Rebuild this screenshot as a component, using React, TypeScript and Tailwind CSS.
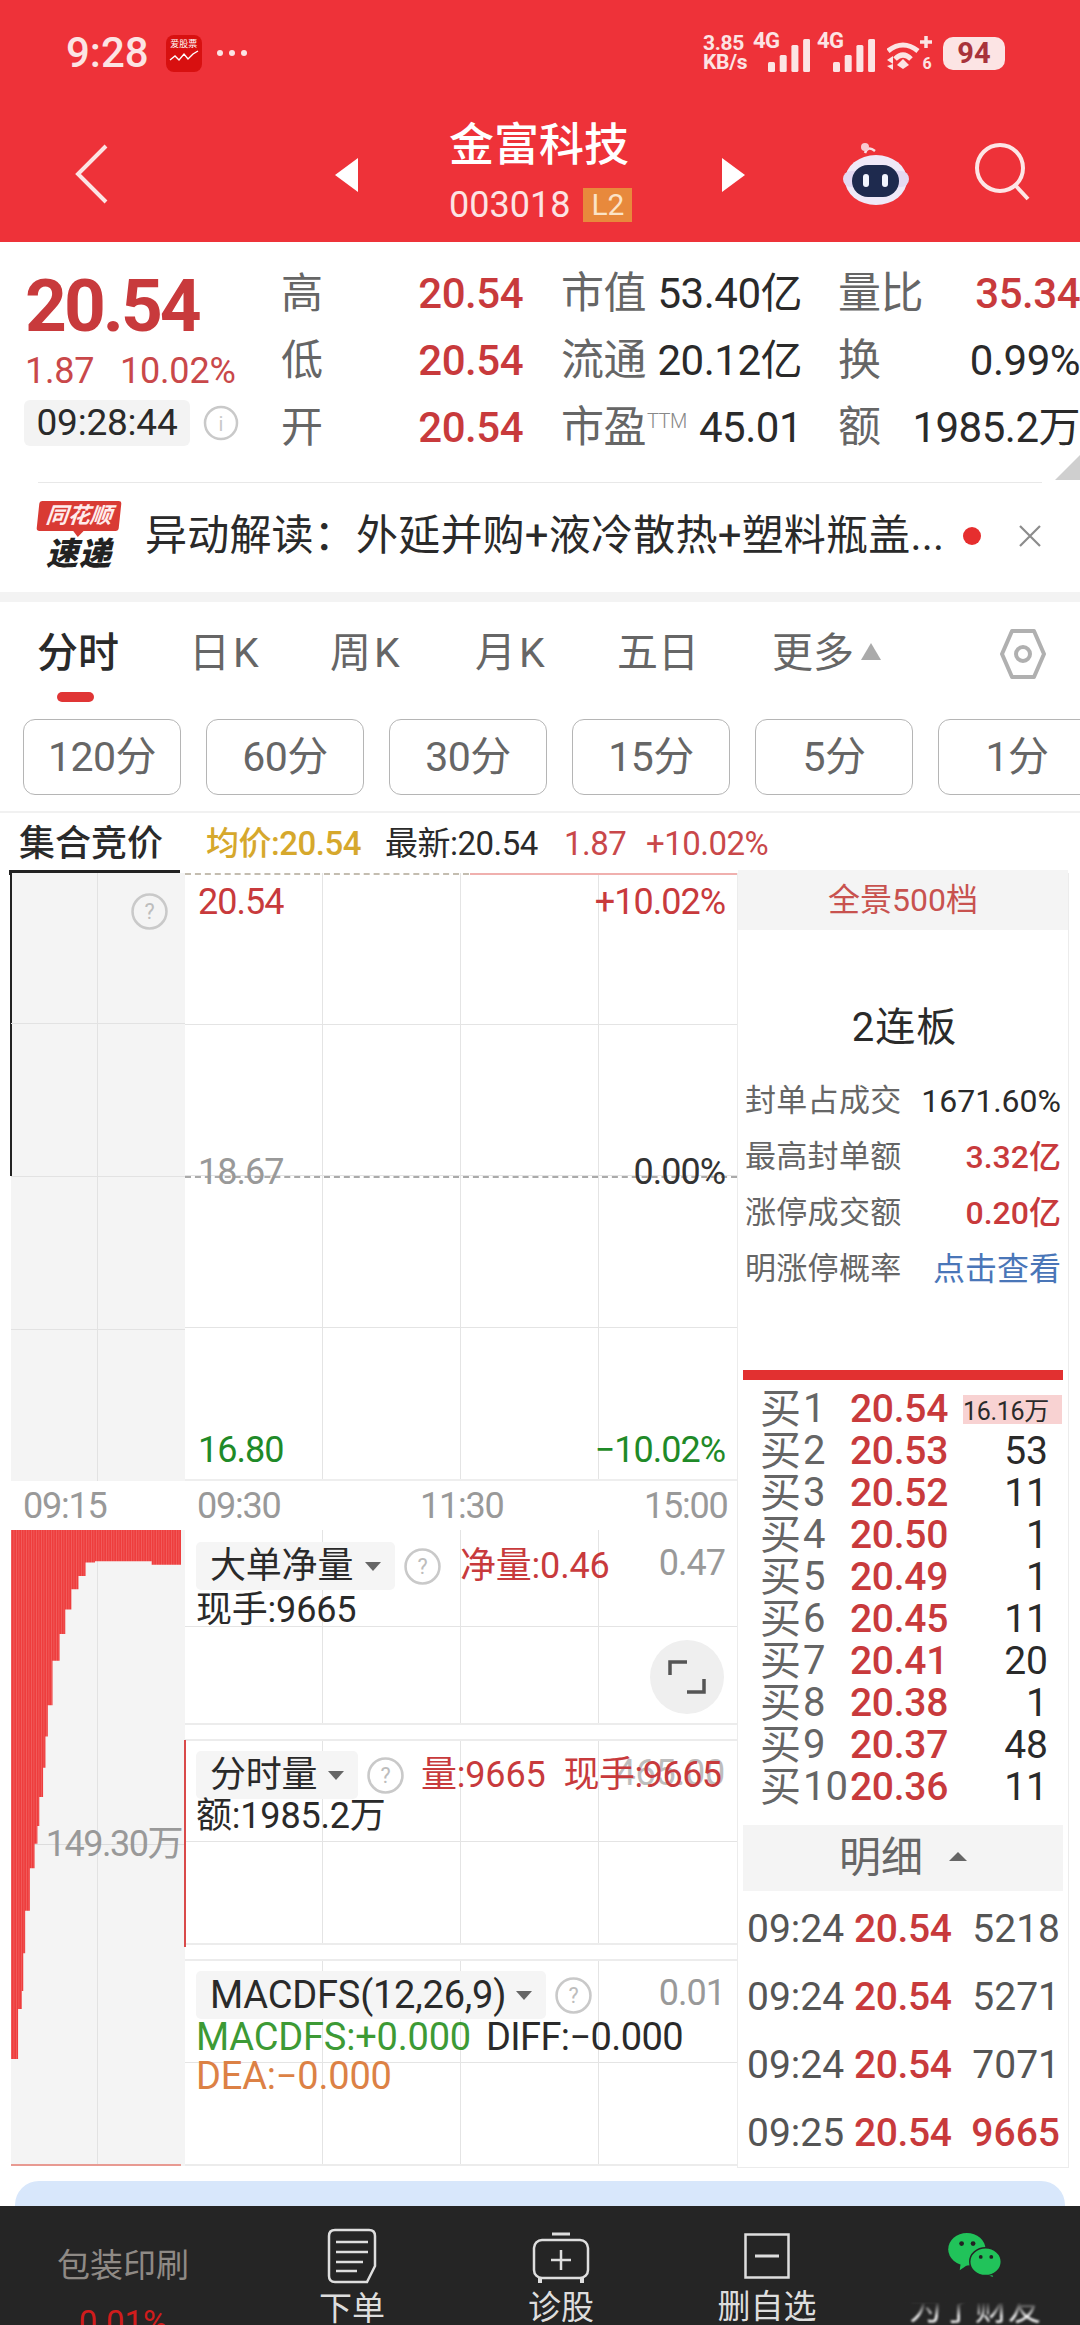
import React from "react";

const FONT = "font-['Roboto','Noto_Sans_CJK_SC',sans-serif]";

function Q({ size = 37, cls = "" }: { size?: number; cls?: string }) {
  return (
    <svg width={size} height={size} viewBox="0 0 36 36" className={cls}>
      <circle cx="18" cy="18" r="16.5" fill="none" stroke="#c9c9c9" strokeWidth="2.5" />
      <text x="18" y="25" textAnchor="middle" fontSize="21" fill="#bdbdbd" fontFamily="Roboto">?</text>
    </svg>
  );
}

function Caret({ up = false, color = "#666", w = 16, h = 9 }: { up?: boolean; color?: string; w?: number; h?: number }) {
  return (
    <svg width={w} height={h} viewBox="0 0 16 9" preserveAspectRatio="none">
      <polygon points={up ? "8,0 16,9 0,9" : "0,0 16,0 8,9"} fill={color} />
    </svg>
  );
}

function Signal() {
  const hs = [10, 17, 27, 33];
  return (
    <svg width="42" height="33" viewBox="0 0 42 33" className="absolute bottom-0 right-0">
      {hs.map((h, i) => (
        <rect key={i} x={i * 11.7} y={33 - h} width="7" height={h} rx="1.5" fill="#fce4e4" />
      ))}
    </svg>
  );
}

function StatusBar() {
  return (
    <div className="flex h-[106px] items-center pl-[66px]">
      <span className="text-[42px] font-medium leading-none tracking-[0px] text-[#fce4e4]">9:28</span>
      <div className="ml-[17px] flex h-[37px] w-[36px] flex-col items-center overflow-hidden rounded-[8px] bg-[#d81010] pt-[3px]">
        <span className="text-[9px] leading-[12px] text-white">爱股票</span>
        <svg width="30" height="14" viewBox="0 0 30 14">
          <polyline points="1,10 6,6 10,10 15,4 19,9 24,4 29,1" fill="none" stroke="#fff" strokeWidth="1.4" />
        </svg>
      </div>
      <div className="ml-[15px] flex gap-[6px]">
        <i className="h-[6px] w-[6px] rounded-full bg-[#fce4e4]" />
        <i className="h-[6px] w-[6px] rounded-full bg-[#fce4e4]" />
        <i className="h-[6px] w-[6px] rounded-full bg-[#fce4e4]" />
      </div>
      <div className="ml-auto flex h-[38px] items-center pr-[75px] text-[#fce4e4]">
        <div className="flex w-[50px] flex-col text-[21px] font-bold leading-[19px] tracking-[-0.3px]">
          <span>3.85</span>
          <span>KB/s</span>
        </div>
        <div className="relative h-[38px] w-[57px]">
          <span className="absolute left-0 top-[-4px] text-[22px] font-bold leading-[21px] tracking-[-0.5px]">4G</span>
          <Signal />
        </div>
        <div className="relative ml-[7px] h-[38px] w-[58px]">
          <span className="absolute left-0 top-[-4px] text-[22px] font-bold leading-[21px] tracking-[-0.5px]">4G</span>
          <Signal />
        </div>
        <svg width="46" height="34" viewBox="0 0 46 34" className="ml-[12px]">
          <g fill="none" stroke="#fce4e4" strokeWidth="5">
            <path d="M1 15 Q16 3 31 15" />
            <path d="M8 23 Q16 15 24 23" />
          </g>
          <polygon points="16,23 22,29 16,33 10,29" fill="#fce4e4" />
          <path d="M0 24 L6 20 L6 28 Z M0 30 L6 34 L6 28 Z" fill="#fce4e4" />
          <path d="M39 0 V12 M33 6 H45" stroke="#fce4e4" strokeWidth="3.5" />
          <text x="40" y="33" textAnchor="middle" fontSize="16" fontWeight="700" fill="#fce4e4" fontFamily="Roboto">6</text>
        </svg>
        <div className="ml-[10px] flex h-[33px] w-[62px] items-center justify-center rounded-[10px] bg-[#fce4e4] text-[29px] font-bold leading-none text-[#a8333b]">94</div>
      </div>
    </div>
  );
}

function NavRow() {
  return (
    <div className="flex h-[136px]">
      <svg width="40" height="64" viewBox="0 0 40 64" className="ml-[72px] mt-[36px]">
        <polyline points="34,4 6,32 34,60" fill="none" stroke="#fce4e4" strokeWidth="4" />
      </svg>
      <svg width="24" height="34" viewBox="0 0 24 34" className="ml-[223px] mt-[52px]">
        <polygon points="23,0 23,34 0,17" fill="#fff" />
      </svg>
      <div className="ml-[90px] flex w-[186px] flex-col">
        <div className="mt-[13px] text-[45px] font-medium leading-[54px] text-white">金富科技</div>
        <div className="mt-[14px] flex items-center">
          <span className="text-[36px] leading-[36px] text-[#fce4e4]">003018</span>
          <span className="ml-[13px] flex h-[34px] w-[49px] items-center justify-center bg-[#e8893c] text-[30px] leading-none text-[#fbe3c8]">L2</span>
        </div>
      </div>
      <svg width="24" height="34" viewBox="0 0 24 34" className="ml-[86px] mt-[52px]">
        <polygon points="1,0 1,34 24,17" fill="#fff" />
      </svg>
      <svg width="68" height="64" viewBox="0 0 68 64" className="ml-[98px] mt-[37px]">
        <path d="M22 10 C24 4 28 5 32 8" fill="none" stroke="#f8dfe4" strokeWidth="2.5" />
        <circle cx="22" cy="4" r="4" fill="#f8c9d2" />
        <ellipse cx="33" cy="37" rx="31" ry="25" fill="#efe9f8" />
        <rect x="0" y="28" width="66" height="16" rx="8" fill="#e4d9f2" />
        <rect x="9" y="22" width="47" height="32" rx="16" fill="#1e2a4e" />
        <rect x="20" y="31" width="6" height="13" rx="3" fill="#f2f5ff" />
        <rect x="39" y="31" width="6" height="13" rx="3" fill="#f2f5ff" />
      </svg>
      <svg width="60" height="60" viewBox="0 0 60 60" className="ml-[63px] mt-[36px]">
        <circle cx="26" cy="26" r="23" fill="none" stroke="#fde6e6" strokeWidth="4" />
        <line x1="42" y1="44" x2="54" y2="57" stroke="#fde6e6" strokeWidth="4" />
      </svg>
    </div>
  );
}

function QRow({ a, b, c, d, e, f, fCls = "text-[#2a2a2a]" }: any) {
  return (
    <div className="flex h-[67px] items-center text-[42px] leading-none tracking-[-0.5px]">
      <div className="flex w-[240px] items-center justify-between">
        <span className="ml-[-2px] text-[42px] text-[#666]">{a}</span>
        <span className="font-medium text-[#c83a3c]">{b}</span>
      </div>
      <div className="ml-[38px] flex w-[241px] items-center justify-between">
        <span className="text-[43px] text-[#666]">{c}</span>
        <span className="text-[#2a2a2a]">{d}</span>
      </div>
      <div className="ml-[36px] flex w-[242px] items-center justify-between">
        <span className="text-[43px] text-[#666]">{e}</span>
        <span className={fCls}>{f}</span>
      </div>
    </div>
  );
}

function Quote() {
  return (
    <div className="relative flex h-[240px]">
      <div className="w-[283px] pl-[25px]">
        <div className="mt-[20px] text-[73px] font-bold leading-[88px] tracking-[-3px] text-[#c83a3c]">20.54</div>
        <div className="mt-[-1px] flex h-[44px] items-center text-[36px] tracking-[-0.2px] text-[#c9484a]">
          <span className="w-[95px]">1.87</span>
          <span>10.02%</span>
        </div>
        <div className="mt-[7px] flex items-center">
          <div className="ml-[-1px] flex h-[46px] w-[166px] items-center justify-center rounded-[6px] bg-[#f3f3f3] text-[37px] tracking-[-0.2px] text-[#2a2a2a]">09:28:44</div>
          <svg width="36" height="36" viewBox="0 0 36 36" className="ml-[13px]">
            <circle cx="18" cy="18" r="16" fill="none" stroke="#c9c9c9" strokeWidth="2.5" />
            <text x="18" y="26" textAnchor="middle" fontSize="20" fill="#c9c9c9" fontFamily="Roboto">i</text>
          </svg>
        </div>
      </div>
      <div className="flex-1 pt-[18px]">
        <QRow a="高" b="20.54" c="市值" d="53.40亿" e="量比" f="35.34" fCls="font-medium text-[#c83a3c]" />
        <QRow a="低" b="20.54" c="流通" d="20.12亿" e="换" f="0.99%" />
        <QRow
          a="开"
          b="20.54"
          c={<span>市盈<sup className="top-[-14px] ml-[1px] text-[20px] font-light leading-none tracking-[-0.5px] text-[#888]">TTM</sup></span>}
          d="45.01"
          e="额"
          f="1985.2万"
        />
      </div>
      <svg width="25" height="25" viewBox="0 0 25 25" className="absolute bottom-[2px] right-0">
        <polygon points="25,0 25,25 0,25" fill="#cfcfcf" />
      </svg>
    </div>
  );
}

function News() {
  return (
    <div className="h-[110px]">
      <div className="mx-[38px] h-px bg-[#e8e8e8]" />
      <div className="flex h-[109px] items-center pb-[4px] pl-[38px]">
        <div className="flex w-[82px] flex-col items-center">
          <div className="relative flex h-[30px] w-[82px] -skew-x-6 items-center justify-center rounded-[3px] bg-[#d93a34] text-[22px] font-bold italic leading-none text-[#ffecec]">
            同花顺
            <span className="absolute bottom-[-6px] left-[36px] h-0 w-0 border-l-[6px] border-r-[6px] border-t-[7px] border-l-transparent border-r-transparent border-t-[#d93a34]" />
          </div>
          <div className="mt-[7px] text-[32px] font-black italic leading-[32px] tracking-[1px] text-[#222]">速递</div>
        </div>
        <div className="ml-[25px] w-[805px] shrink-0 whitespace-nowrap text-[42px] leading-none tracking-[0.2px] text-[#2a2a2a]">异动解读：外延并购+液冷散热+塑料瓶盖...</div>
        <div className="ml-[13px] h-[18px] w-[18px] shrink-0 rounded-full bg-[#e62e2e]" />
        <svg width="24" height="24" viewBox="0 0 24 24" className="ml-[37px] shrink-0">
          <path d="M2 2 L22 22 M22 2 L2 22" stroke="#8c8c8c" strokeWidth="2.2" />
        </svg>
      </div>
    </div>
  );
}

function Tabs() {
  return (
    <div className="relative flex h-[103px] items-center text-[41px] leading-none text-[#666]">
      <span className="ml-[37px] w-[152px] font-medium text-[#2a2a2a]">分时</span>
      <span className="w-[141px] tracking-[3px]">日K</span>
      <span className="w-[145px] tracking-[3px]">周K</span>
      <span className="w-[142px] tracking-[3px]">月K</span>
      <span className="w-[155px]">五日</span>
      <span>更多</span>
      <span className="ml-[7px] mt-[-4px] flex"><Caret up color="#aaa" w={20} h={17} /></span>
      <svg width="46" height="52" viewBox="0 0 46 52" className="ml-[119px]">
        <polygon points="12,3 34,3 44,26 34,49 12,49 2,26" fill="none" stroke="#b0b0b0" strokeWidth="4" strokeLinejoin="round" />
        <circle cx="23" cy="26" r="7" fill="none" stroke="#b0b0b0" strokeWidth="4" />
      </svg>
      <div className="absolute bottom-[3px] left-[57px] h-[10px] w-[37px] rounded-full bg-[#e03535]" />
    </div>
  );
}

function Periods() {
  const items = ["120分", "60分", "30分", "15分", "5分", "1分"];
  return (
    <div className="flex h-[108px] gap-[25px] overflow-hidden border-b-2 border-[#f1f1f1] pl-[23px] pt-[14px]">
      {items.map((t) => (
        <div key={t} className="flex h-[76px] w-[158px] shrink-0 items-center justify-center rounded-[12px] border border-[#b5b5b5] text-[41px] leading-none tracking-[-0.5px] text-[#666]">
          {t}
        </div>
      ))}
    </div>
  );
}

function InfoLine() {
  return (
    <div className="flex h-[60px] items-center pt-[1px] text-[33px] leading-none tracking-[-0.5px]">
      <span className="ml-[19px] w-[187px] text-[36px] font-medium tracking-normal text-[#2a2a2a]">集合竞价</span>
      <span className="w-[179px] font-medium text-[#d6a82c]">均价:20.54</span>
      <span className="w-[179px] text-[#2a2a2a]">最新:20.54</span>
      <span className="w-[82px] text-[#c9484a]">1.87</span>
      <span className="text-[#c9484a]">+10.02%</span>
    </div>
  );
}

function Cells({ rows }: { rows: number }) {
  const cells = Array.from({ length: rows * 4 });
  return (
    <div className="absolute inset-0 grid grid-cols-4" style={{ gridTemplateRows: `repeat(${rows},1fr)` }}>
      {cells.map((_, i) => (
        <div key={i} className={`border-[#e4e4e4] ${(i + 1) % 4 === 0 ? "" : "border-r"} ${i < (rows - 1) * 4 ? "border-b" : ""}`} />
      ))}
    </div>
  );
}

function PriceChart() {
  return (
    <div className="flex h-[608px]">
      <div className="relative w-[174px] bg-[#f4f4f4]">
        <div className="absolute left-[-1px] top-0 h-[303px] w-[2px] bg-[#222]" />
        <div className="absolute bottom-0 left-[86px] top-0 w-px bg-[#e2e2e2]" />
        <div className="absolute inset-x-0 top-[150px] h-px bg-[#e2e2e2]" />
        <div className="absolute inset-x-0 top-[303px] h-px bg-[#e2e2e2]" />
        <div className="absolute inset-x-0 top-[456px] h-px bg-[#e2e2e2]" />
        <Q cls="absolute left-[120px] top-[20px]" />
      </div>
      <div className="relative flex-1 border-b-2 border-[#eeeeee] text-[36px] leading-none tracking-[-1px]">
        <Cells rows={4} />
        <div className="absolute inset-x-0 top-0 border-t-2 border-dashed border-[#c4bdb0]" />
        <div className="absolute right-0 top-0 h-[2px] w-[267px] bg-[#f0b0ae]" />
        <div className="absolute inset-x-0 top-[303px] border-t-2 border-dashed border-[#aaaaaa]" />
        <span className="absolute left-[13px] top-[11px] text-[#c83a3c]">20.54</span>
        <span className="absolute right-[12px] top-[11px] text-[#c83a3c]">+10.02%</span>
        <span className="absolute left-[13px] top-[281px] text-[#999]">18.67</span>
        <span className="absolute right-[12px] top-[281px] text-[#333]">0.00%</span>
        <span className="absolute bottom-[11px] left-[13px] text-[#1f8a28]">16.80</span>
        <span className="absolute bottom-[11px] right-[12px] text-[#1f8a28]">−10.02%</span>
      </div>
    </div>
  );
}

function AxisRow() {
  return (
    <div className="flex h-[49px] items-center text-[36px] leading-none tracking-[-1.2px] text-[#999]">
      <span className="ml-[12px] w-[174px]">09:15</span>
      <span className="w-[223px]">09:30</span>
      <span className="w-[224px]">11:30</span>
      <span>15:00</span>
    </div>
  );
}

function VolumeCol() {
  const steps: [number, number][] = [
    [0, 1252], [15, 1140], [23, 1100], [26, 1015], [30, 920], [40, 825], [50, 770], [56, 730], [60, 665], [68, 600],
    [73, 530], [78, 460], [88, 360], [103, 300], [115, 245], [128, 200], [143, 170], [158, 140], [178, 137], [298, 145],
  ];
  let d = "M0 0 ";
  steps.forEach(([x, y], i) => {
    const sx = x / 2.119;
    const sy = y / 2.24 - 30;
    const next = i + 1 < steps.length ? steps[i + 1][0] / 2.119 : 170;
    d += `L${sx} ${sy} L${next} ${sy} `;
  });
  d += "L170 0 Z";
  return (
    <div className="relative h-[636px] w-[174px] bg-[#f4f4f4]">
      <div className="absolute bottom-0 left-[86px] top-0 w-px bg-[#e2e2e2]" />
      <div className="absolute inset-x-0 top-[314px] h-px bg-[#dcdcdc]" />
      <svg width="170" height="636" viewBox="0 0 170 636" className="absolute left-0 top-0">
        <defs>
          <pattern id="stripes" width="2.5" height="10" patternUnits="userSpaceOnUse">
            <rect width="2.5" height="10" fill="#ee3d3d" />
            <rect width="0.6" height="10" fill="#f26a6a" />
          </pattern>
        </defs>
        <path d={d} fill="url(#stripes)" />
        <rect x="0" y="634" width="170" height="2" fill="#e89a92" />
      </svg>
      <span className="absolute right-[3px] top-[296px] text-[36px] leading-none tracking-[-1.5px] text-[#999]">149.30万</span>
    </div>
  );
}

function Chip({ label, w }: { label: string; w: number }) {
  return (
    <div className="flex h-[48px] shrink-0 items-center rounded-[5px] bg-[#f5f5f5] pl-[14px] leading-none text-[#2a2a2a]" style={{ width: w }}>
      <span>{label}</span>
      <span className="ml-auto mr-[14px] flex"><Caret color="#666" /></span>
    </div>
  );
}

function Panels() {
  return (
    <div className="flex h-[636px] flex-1 flex-col gap-[14px] text-[36px] leading-none tracking-[-0.2px]">
      <div className="relative h-[195px] border-b-2 border-[#ececec]">
        <Cells rows={2} />
        <div className="relative pl-[11px] pt-[12px]">
          <div className="flex items-center">
            <Chip label="大单净量" w={199} />
            <Q cls="ml-[9px]" />
            <span className="ml-[19px] text-[#c83a3c]">净量:0.46</span>
            <span className="absolute right-[12px] top-[15px] tracking-[-1px] text-[#999]">0.47</span>
          </div>
          <div className="mt-[2px] leading-[36px] text-[#2a2a2a]">现手:9665</div>
        </div>
        <div className="absolute right-[13px] top-[110px] flex h-[74px] w-[74px] items-center justify-center rounded-full bg-[#efefef]">
          <svg width="40" height="40" viewBox="0 0 40 40">
            <path d="M3 18 V5 H20 M37 22 V35 H20" fill="none" stroke="#555" strokeWidth="3.5" />
          </svg>
        </div>
      </div>
      <div className="relative h-[206px] border-y-2 border-[#ececec]">
        <Cells rows={2} />
        <div className="absolute -left-px -top-px h-[207px] w-[2px] bg-[#d94a4a]" />
        <span className="absolute right-[12px] top-[14px] text-[#bdbdbd]">465.00</span>
        <div className="relative pl-[11px] pt-[10px]">
          <div className="flex items-center">
            <Chip label="分时量" w={162} />
            <Q cls="ml-[9px]" />
            <span className="ml-[17px] text-[#c83a3c]">量:9665</span>
            <span className="ml-[18px] tracking-[-0.5px] text-[#c83a3c]">现手:9665</span>
          </div>
          <div className="mt-[-1px] leading-[36px] text-[#2a2a2a]">额:1985.2万</div>
        </div>
      </div>
      <div className="relative h-[207px] border-y-2 border-[#ececec] text-[38px]">
        <Cells rows={2} />
        <div className="relative pl-[11px] pt-[10px]">
          <div className="flex items-center">
            <Chip label="MACDFS(12,26,9)" w={350} />
            <Q cls="ml-[9px]" />
            <span className="absolute right-[12px] top-[14px] text-[36px] tracking-[-1px] text-[#999]">0.01</span>
          </div>
          <div className="mt-[-1px] flex leading-[38px]">
            <span className="text-[#3d9a35]">MACDFS:+0.000</span>
            <span className="ml-[15px] tracking-[-0.6px] text-[#2a2a2a]">DIFF:−0.000</span>
          </div>
          <div className="leading-[40px] text-[#dc8145]">DEA:−0.000</div>
        </div>
      </div>
    </div>
  );
}

function SealRow({ l, v, cls }: { l: string; v: string; cls: string }) {
  return (
    <div className="flex h-[56px] items-center justify-between px-[7px]">
      <span className="text-[31px] tracking-[0.3px] text-[#666]">{l}</span>
      <span className={`text-[32px] ${cls}`}>{v}</span>
    </div>
  );
}

function BuyRow({ n, p, v, first }: { n: number; p: string; v: string; first?: boolean }) {
  return (
    <div className="flex h-[42px] items-center pl-[22px] text-[39px] leading-none">
      <span className="w-[43px] text-[41px] text-[#666]">买</span>
      <span className="w-[47px] text-[40px] text-[#666]">{n}</span>
      <span className="w-[95px] font-medium tracking-[-0.3px] text-[#c83a3c]">{p}</span>
      {first ? (
        <span className="ml-[18px] flex h-[29px] w-[99px] items-end bg-[#f8d2d2] text-[25px] tracking-[-0.3px] text-[#2a2a2a]">16.16万</span>
      ) : (
        <span className="ml-[18px] w-[85px] text-right text-[#2a2a2a]">{v}</span>
      )}
    </div>
  );
}

function TickRow({ t, p, v, red }: { t: string; p: string; v: string; red?: boolean }) {
  return (
    <div className="flex h-[68px] items-center pl-[9px] pr-[8px] text-[39px] leading-none">
      <span className="w-[107px] text-[#555]">{t}</span>
      <span className="font-medium tracking-[-0.4px] text-[#c83a3c]">{p}</span>
      <span className={`ml-auto ${red ? "font-medium text-[#c83a3c]" : "text-[#555]"}`}>{v}</span>
    </div>
  );
}

function RightPanel() {
  const buys: [string, string][] = [["20.53", "53"], ["20.52", "11"], ["20.50", "1"], ["20.49", "1"], ["20.45", "11"], ["20.41", "20"], ["20.38", "1"], ["20.37", "48"], ["20.36", "11"]];
  return (
    <div className="h-[1295px] w-[332px] border border-t-0 border-[#ececec] text-[#2a2a2a]">
      <div className="mt-[-3px] flex h-[60px] items-center justify-center bg-[#f4f4f4] text-[32px] leading-none text-[#c8524f]">全景500档</div>
      <div className="mt-[74px] flex h-[48px] items-center justify-center pl-[3px] text-[40px] leading-none tracking-[1px] text-[#2a2a2a]">2连板</div>
      <div className="mt-[21px]">
        <SealRow l="封单占成交" v="1671.60%" cls="text-[#2a2a2a]" />
        <SealRow l="最高封单额" v="3.32亿" cls="font-medium text-[#c83a3c]" />
        <SealRow l="涨停成交额" v="0.20亿" cls="font-medium text-[#c83a3c]" />
        <SealRow l="明涨停概率" v="点击查看" cls="text-[#4a76b8]" />
      </div>
      <div className="mx-[5px] mt-[73px] h-[10px] bg-[#e23030]" />
      <div className="mt-[8px]">
        <BuyRow n={1} p="20.54" v="" first />
        {buys.map(([p, v], i) => (
          <BuyRow key={p} n={i + 2} p={p} v={v} />
        ))}
      </div>
      <div className="mx-[5px] mt-[17px] flex h-[66px] items-center justify-center bg-[#f4f4f4] text-[42px] leading-none text-[#666]">
        <span>明细</span>
        <span className="ml-[26px] mt-[-3px] flex"><Caret up color="#666" w={18} h={9} /></span>
      </div>
      <div className="mt-[4px]">
        <TickRow t="09:24" p="20.54" v="5218" />
        <TickRow t="09:24" p="20.54" v="5271" />
        <TickRow t="09:24" p="20.54" v="7071" />
        <TickRow t="09:25" p="20.54" v="9665" red />
      </div>
    </div>
  );
}

function BottomBar() {
  return (
    <div className="flex h-[119px] overflow-hidden bg-[#252525] text-[33px] leading-none text-[#dddddd]">
      <div className="flex w-[246px] flex-col items-center pt-[12px]">
        <svg width="25" height="15" viewBox="0 0 25 15"><polygon points="12.5,0 25,15 0,15" fill="#bdbdbd" /></svg>
        <span className="mt-[31px] text-[#8f8a85]">包装印刷</span>
        <span className="mt-[24px] text-[#d11c1c]">0.01%</span>
      </div>
      <div className="flex w-[212px] flex-col items-center pt-[22px]">
        <svg width="50" height="56" viewBox="0 0 50 56">
          <path d="M8 2 H42 Q48 2 48 8 V38 L40 54 H8 Q2 54 2 48 V8 Q2 2 8 2 Z" fill="none" stroke="#dedede" strokeWidth="2.5" />
          <path d="M9 14 H41 M9 24 H41 M9 34 H36 M9 43 H30" stroke="#dedede" strokeWidth="2.5" />
        </svg>
        <span className="mt-[8px]">下单</span>
      </div>
      <div className="flex w-[206px] flex-col items-center pt-[26px]">
        <svg width="58" height="52" viewBox="0 0 58 52">
          <path d="M20 2 H38" stroke="#dedede" strokeWidth="3" />
          <rect x="2" y="8" width="54" height="38" rx="8" fill="none" stroke="#dedede" strokeWidth="2.5" />
          <path d="M29 18 V38 M19 28 H39" stroke="#dedede" strokeWidth="2.5" />
          <path d="M8 46 V51 M50 46 V51" stroke="#dedede" strokeWidth="4" />
        </svg>
        <span className="mt-[7px]">诊股</span>
      </div>
      <div className="flex w-[206px] flex-col items-center pt-[27px]">
        <svg width="46" height="46" viewBox="0 0 46 46">
          <rect x="1.5" y="1.5" width="43" height="43" fill="none" stroke="#dedede" strokeWidth="2.5" />
          <path d="M11 23 H35" stroke="#dedede" strokeWidth="3" />
        </svg>
        <span className="mt-[11px]">删自选</span>
      </div>
      <div className="flex flex-1 flex-col items-center pt-[27px]">
        <svg width="56" height="46" viewBox="0 0 56 46">
          <path d="M13 32 L12 39 L20 33.5 Z" fill="#21c35a" />
          <ellipse cx="19.5" cy="17" rx="19.5" ry="17" fill="#21c35a" />
          <path d="M44 40 L47 46 L38 43 Z" fill="#21c35a" />
          <ellipse cx="39" cy="30" rx="16.5" ry="14.5" fill="#21c35a" stroke="#252525" strokeWidth="1.5" />
          <circle cx="14" cy="11" r="2.5" fill="#222" />
          <circle cx="26" cy="11" r="2.5" fill="#222" />
          <circle cx="34" cy="25" r="2" fill="#222" />
          <circle cx="45" cy="25" r="2" fill="#222" />
        </svg>
        <div className="relative mt-[15px]">
          <span className="block text-[33px] text-[#f2f2f2] blur-[1px]">为了财友</span>
          <div className="absolute inset-x-[-6px] top-[-4px] h-[28px] bg-gradient-to-b from-[#252525] via-[#252525] to-transparent" />
        </div>
      </div>
    </div>
  );
}

export default function App() {
  return (
    <div className={`${FONT} h-[2325px] w-[1080px] overflow-hidden bg-white`}>
      <div className="h-[242px] bg-[#ee3239]">
        <StatusBar />
        <NavRow />
      </div>
      <Quote />
      <News />
      <div className="h-[10px] bg-[#f3f3f3]" />
      <Tabs />
      <Periods />
      <InfoLine />
      <div className="relative flex">
        <div className="absolute left-[9px] top-[-3px] h-[5px] w-[171px] bg-[#222]" />
        <div className="ml-[11px] w-[726px]">
          <PriceChart />
          <AxisRow />
          <div className="flex">
            <VolumeCol />
            <Panels />
          </div>
        </div>
        <RightPanel />
      </div>
      <div className="mx-[15px] mt-[13px] h-[25px] rounded-t-[24px] bg-[#d8e7fb]" />
      <BottomBar />
    </div>
  );
}
